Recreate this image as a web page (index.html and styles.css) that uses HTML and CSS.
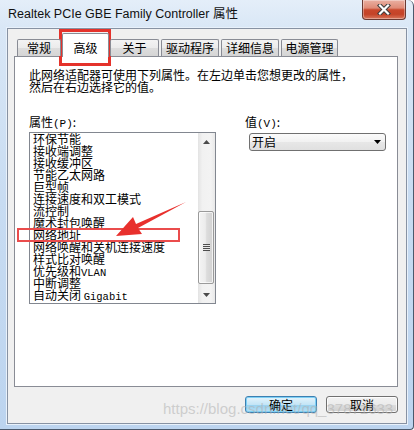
FILE: index.html
```html
<!DOCTYPE html>
<html lang="zh-CN">
<head>
<meta charset="utf-8">
<title>Realtek PCIe GBE Family Controller 属性</title>
<link rel="stylesheet" href="styles.css">
</head>
<body>
<div class="window">
  <div class="titlebar">
    <span class="title">Realtek PCIe GBE Family Controller 属性</span>
    <div class="close">
      <svg width="14" height="11" viewBox="0 0 14 11">
        <path d="M3 1.5 L11 9.5 M11 1.5 L3 9.5" stroke="#3d3d3d" stroke-width="4.2" stroke-linecap="square" fill="none"/>
        <path d="M3 1.5 L11 9.5 M11 1.5 L3 9.5" stroke="#ffffff" stroke-width="2.2" stroke-linecap="square" fill="none"/>
      </svg>
    </div>
  </div>
  <div class="client">
    <div class="tabs">
      <div class="tab t-general">常规</div>
      <div class="tab active t-adv">高级</div>
      <div class="tab t-about">关于</div>
      <div class="tab t-driver">驱动程序</div>
      <div class="tab t-detail">详细信息</div>
      <div class="tab t-power">电源管理</div>
    </div>
    <div class="panel">
      <p class="desc">此网络适配器可使用下列属性。在左边单击您想更改的属性，<br>然后在右边选择它的值。</p>
      <div class="fields">
        <div class="prop-col">
          <div class="label">属性<span class="mono">(P)</span>:</div>
          <div class="listbox">
            <ul class="items">
              <li>环保节能</li>
              <li>接收端调整</li>
              <li>接收缓冲区</li>
              <li>节能乙太网路</li>
              <li>巨型帧</li>
              <li>连接速度和双工模式</li>
              <li>流控制</li>
              <li>魔术封包唤醒</li>
              <li>网络地址</li>
              <li>网络唤醒和关机连接速度</li>
              <li>样式比对唤醒</li>
              <li>优先级和<span class="mono">VLAN</span></li>
              <li>中断调整</li>
              <li>自动关闭 <span class="mono">Gigabit</span></li>
            </ul>
            <div class="scrollbar">
              <div class="sb-btn">
                <svg width="7" height="4" viewBox="0 0 7 4"><path d="M0 4 L3.5 0 L7 4 Z" fill="#4a4a4a"/></svg>
              </div>
              <div class="sb-track">
                <div class="thumb"><span class="grip"></span></div>
              </div>
              <div class="sb-btn">
                <svg width="7" height="4" viewBox="0 0 7 4"><path d="M0 0 L7 0 L3.5 4 Z" fill="#4a4a4a"/></svg>
              </div>
            </div>
          </div>
        </div>
        <div class="value-col">
          <div class="label">值<span class="mono">(V)</span>:</div>
          <div class="combo">
            <span>开启</span>
            <svg width="7" height="4" viewBox="0 0 7 4"><path d="M0 0 L7 0 L3.5 4 Z" fill="#000"/></svg>
          </div>
        </div>
      </div>
    </div>
    <div class="buttons">
      <button class="btn default">确定</button>
      <button class="btn">取消</button>
    </div>
  </div>
  <div class="mark mark-tab"></div>
  <div class="mark mark-item"></div>
  <svg class="arrow" width="414" height="430" viewBox="0 0 414 430">
    <polygon points="186,202 138,228 142,234 116,236 133,217 136,224" fill="#e8302d"/>
  </svg>
  <div class="watermark">https://blog.csdn.net/qq_37871633</div>
</div>
</body>
</html>
```

FILE: styles.css
```css
* { box-sizing: border-box; }
html, body { margin: 0; padding: 0; }
body {
  width: 414px;
  height: 430px;
  overflow: hidden;
  background: #ffffff;
  font-family: "Noto Sans CJK SC", sans-serif;
  font-size: 12px;
  color: #000;
}

.window {
  position: relative;
  width: 414px;
  height: 430px;
  display: flex;
  flex-direction: column;
  background: linear-gradient(180deg, #e4eef9 0px, #d9e7f6 28px, #c8dcf2 200px, #bcd4ef 100%);
  border-right: 1px solid #4a596c;
  border-bottom: 1px solid #4a596c;
  border-top-right-radius: 6px;
  border-bottom-right-radius: 4px;
}

.titlebar {
  height: 28px;
  flex: none;
  display: flex;
  align-items: flex-start;
  padding: 0 7px 0 8px;
}
.title {
  font-family: "Liberation Sans", "Noto Sans CJK SC", sans-serif;
  font-size: 12.5px;
  line-height: 28px;
  color: #111;
}
.close {
  margin-left: auto;
  width: 44px;
  height: 20px;
  display: flex;
  align-items: center;
  justify-content: center;
  border: 1px solid #6a3a33;
  border-top: none;
  border-radius: 0 0 4px 4px;
  background: linear-gradient(180deg, #eab0a2 0%, #df8b77 42%, #c9472c 52%, #c44328 75%, #d9765c 100%);
  box-shadow: inset 0 0 0 1px rgba(255,255,255,0.35);
}

.client {
  flex: 1;
  margin: 0 6px 5px 7px;
  background: #f0f0f0;
  border: 1px solid #8792a3;
  box-shadow: 0 0 0 1px #e8f1fb;
  display: flex;
  flex-direction: column;
  padding: 4px 8px 0 6px;
}

.tabs {
  height: 23px;
  flex: none;
  display: flex;
  align-items: flex-end;
  padding-left: 3px;
  position: relative;
  z-index: 1;
}
.tab {
  height: 17px;
  margin-right: 2px;
  border: 1px solid #898c95;
  border-bottom: none;
  border-radius: 2px 2px 0 0;
  background: linear-gradient(180deg, #f3f3f3 0%, #ebebeb 50%, #dddddd 51%, #d5d5d5 100%);
  text-align: center;
  line-height: 15px;
  font-size: 12px;
  color: #000;
}
.tab.active {
  height: 24px;
  margin-bottom: -1px;
  margin-left: -1px;
  margin-right: 1px;
  padding-top: 6px;
  background: #ffffff;
}
.t-general { width: 44px; }
.t-adv { width: 47px; }
.t-about { width: 49px; }
.t-driver { width: 58px; }
.t-detail { width: 58px; }
.t-power { width: 57px; }

.panel {
  height: 331px;
  flex: none;
  background: #ffffff;
  border: 1px solid #898c95;
  padding: 12px 14px 0 14px;
}
.desc {
  margin: 0;
  font-size: 12px;
  line-height: 12px;
  white-space: nowrap;
}
.fields {
  margin-top: 23px;
  display: flex;
  gap: 29px;
}
.label {
  font-size: 12px;
  line-height: 12px;
  white-space: nowrap;
}
.mono {
  font-family: "Liberation Mono", monospace;
  font-size: 10.5px;
}
.label .mono { font-size: 11px; }

.listbox {
  margin-top: 2px;
  width: 187px;
  height: 172px;
  border: 1px solid #828790;
  background: #ffffff;
  display: flex;
}
.items {
  flex: 1;
  margin: 0;
  padding: 0 0 0 3px;
  list-style: none;
}
.items li {
  font-size: 12px;
  line-height: 12px;
  height: 12px;
  white-space: nowrap;
}

.scrollbar {
  width: 17px;
  flex: none;
  display: flex;
  flex-direction: column;
  background: linear-gradient(90deg, #e3e3e3 0%, #f1f1f1 25%, #f3f3f3 75%, #e9e9e9 100%);
}
.sb-btn {
  height: 17px;
  flex: none;
  display: flex;
  align-items: center;
  justify-content: center;
}
.sb-track {
  flex: 1;
}
.thumb {
  margin-top: 61px;
  width: 16px;
  height: 73px;
  border: 1px solid #9a9a9a;
  border-radius: 2px;
  background: linear-gradient(90deg, #f4f4f4 0%, #ececec 45%, #dcdcdc 55%, #d2d2d2 100%);
  box-shadow: inset 0 0 0 1px rgba(255,255,255,0.7);
  display: flex;
  align-items: center;
  justify-content: center;
}
.grip {
  width: 7px;
  height: 7px;
  background: repeating-linear-gradient(180deg, #4d4d4d 0px, #4d4d4d 1px, #e8e8e8 1px, #e8e8e8 2px);
}

.combo {
  margin-top: 3px;
  margin-left: 4px;
  width: 137px;
  height: 18px;
  border: 1px solid #707070;
  border-radius: 3px;
  background: linear-gradient(180deg, #fbfbfb 0%, #f1f1f1 50%, #e7e7e7 51%, #e0e0e0 100%);
  display: flex;
  align-items: center;
  justify-content: space-between;
  padding: 0 4px 0 2px;
  font-size: 12px;
  line-height: 16px;
}

.buttons {
  margin-top: 9px;
  display: flex;
  justify-content: flex-end;
  gap: 9px;
}
.btn {
  width: 72px;
  height: 17px;
  padding: 0;
  border: 1px solid #707070;
  border-radius: 3px;
  background: linear-gradient(180deg, #f2f2f2 0%, #ebebeb 50%, #dddddd 51%, #cfcfcf 100%);
  box-shadow: inset 0 0 0 1px rgba(255,255,255,0.8);
  font-family: "Noto Sans CJK SC", sans-serif;
  font-size: 12px;
  line-height: 15px;
  color: #000;
}
.btn.default {
  border-color: #3c7fb1;
  background: linear-gradient(180deg, #e5f4fc 0%, #c4e5f6 50%, #98d1ef 51%, #b6e0f5 100%);
  box-shadow: inset 0 0 0 1px #7ed0f5;
}

.mark {
  position: absolute;
  pointer-events: none;
}
.mark-tab {
  left: 59px;
  top: 29px;
  width: 52px;
  height: 37px;
  border: 3px solid #e4322b;
}
.mark-item {
  left: 17px;
  top: 228px;
  width: 163px;
  height: 14px;
  border: 2px solid #ea4c4c;
}
.arrow {
  position: absolute;
  left: 0;
  top: 0;
  pointer-events: none;
}
.watermark {
  position: absolute;
  left: 163px;
  top: 400px;
  font-family: "Liberation Sans", sans-serif;
  font-size: 15px;
  line-height: 18px;
  color: rgba(175, 175, 175, 0.55);
  white-space: nowrap;
  pointer-events: none;
}
```
